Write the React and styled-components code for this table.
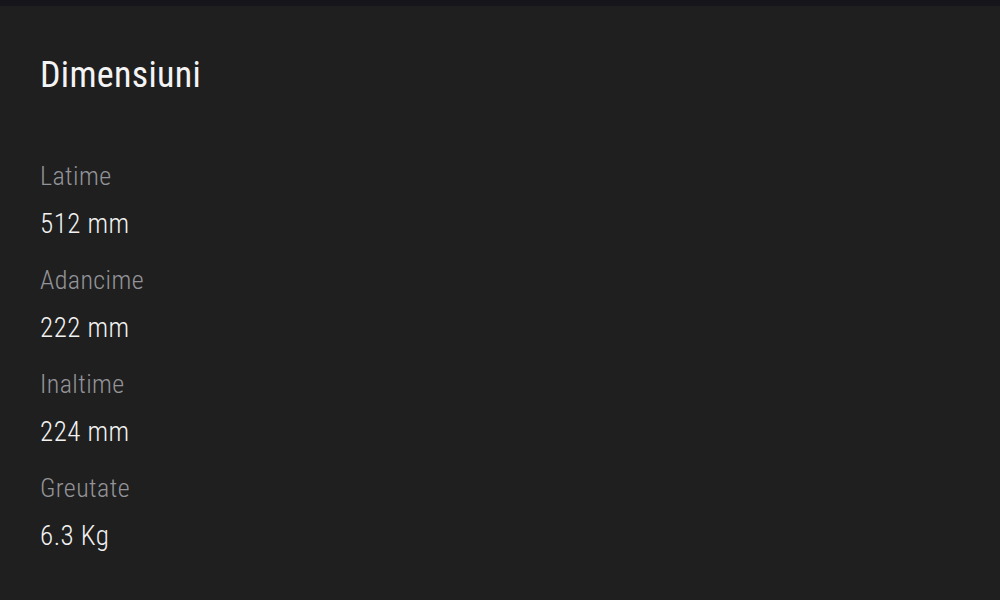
import React from 'react'
import styled, { createGlobalStyle } from 'styled-components'

const GlobalStyle = createGlobalStyle`
  * {
    box-sizing: border-box;
    margin: 0;
    padding: 0;
  }
  body {
    background: #1f1f1f;
    font-family: "Roboto Condensed", Roboto, "Liberation Sans", sans-serif;
  }
`

const TopBar = styled.div`
  height: 6px;
  background: #15151b;
`

const Page = styled.div`
  min-height: 594px;
  background: #1f1f1f;
  padding: 49px 40px 0;
`

const Title = styled.h1`
  font-size: 36px;
  font-weight: 400;
  color: #f4f4f4;
  letter-spacing: 0.3px;
  line-height: 40px;
  margin-bottom: 66px;
`

const Specs = styled.dl`
  display: flex;
  flex-direction: column;
`

const Label = styled.dt`
  font-size: 26px;
  font-weight: 300;
  color: #939499;
  letter-spacing: 0.4px;
  line-height: 30px;
  margin-bottom: 17px;
`

const Value = styled.dd`
  font-size: 27px;
  font-weight: 300;
  color: #f2f2f2;
  letter-spacing: 0.5px;
  line-height: 32px;
  margin-bottom: 25px;
`

const specs = [
  { label: 'Latime', value: '512 mm' },
  { label: 'Adancime', value: '222 mm' },
  { label: 'Inaltime', value: '224 mm' },
  { label: 'Greutate', value: '6.3 Kg' },
]

export default function App() {
  return (
    <>
      <GlobalStyle />
      <TopBar />
      <Page>
        <Title>Dimensiuni</Title>
        <Specs>
          {specs.map((s) => (
            <React.Fragment key={s.label}>
              <Label>{s.label}</Label>
              <Value>{s.value}</Value>
            </React.Fragment>
          ))}
        </Specs>
      </Page>
    </>
  )
}
